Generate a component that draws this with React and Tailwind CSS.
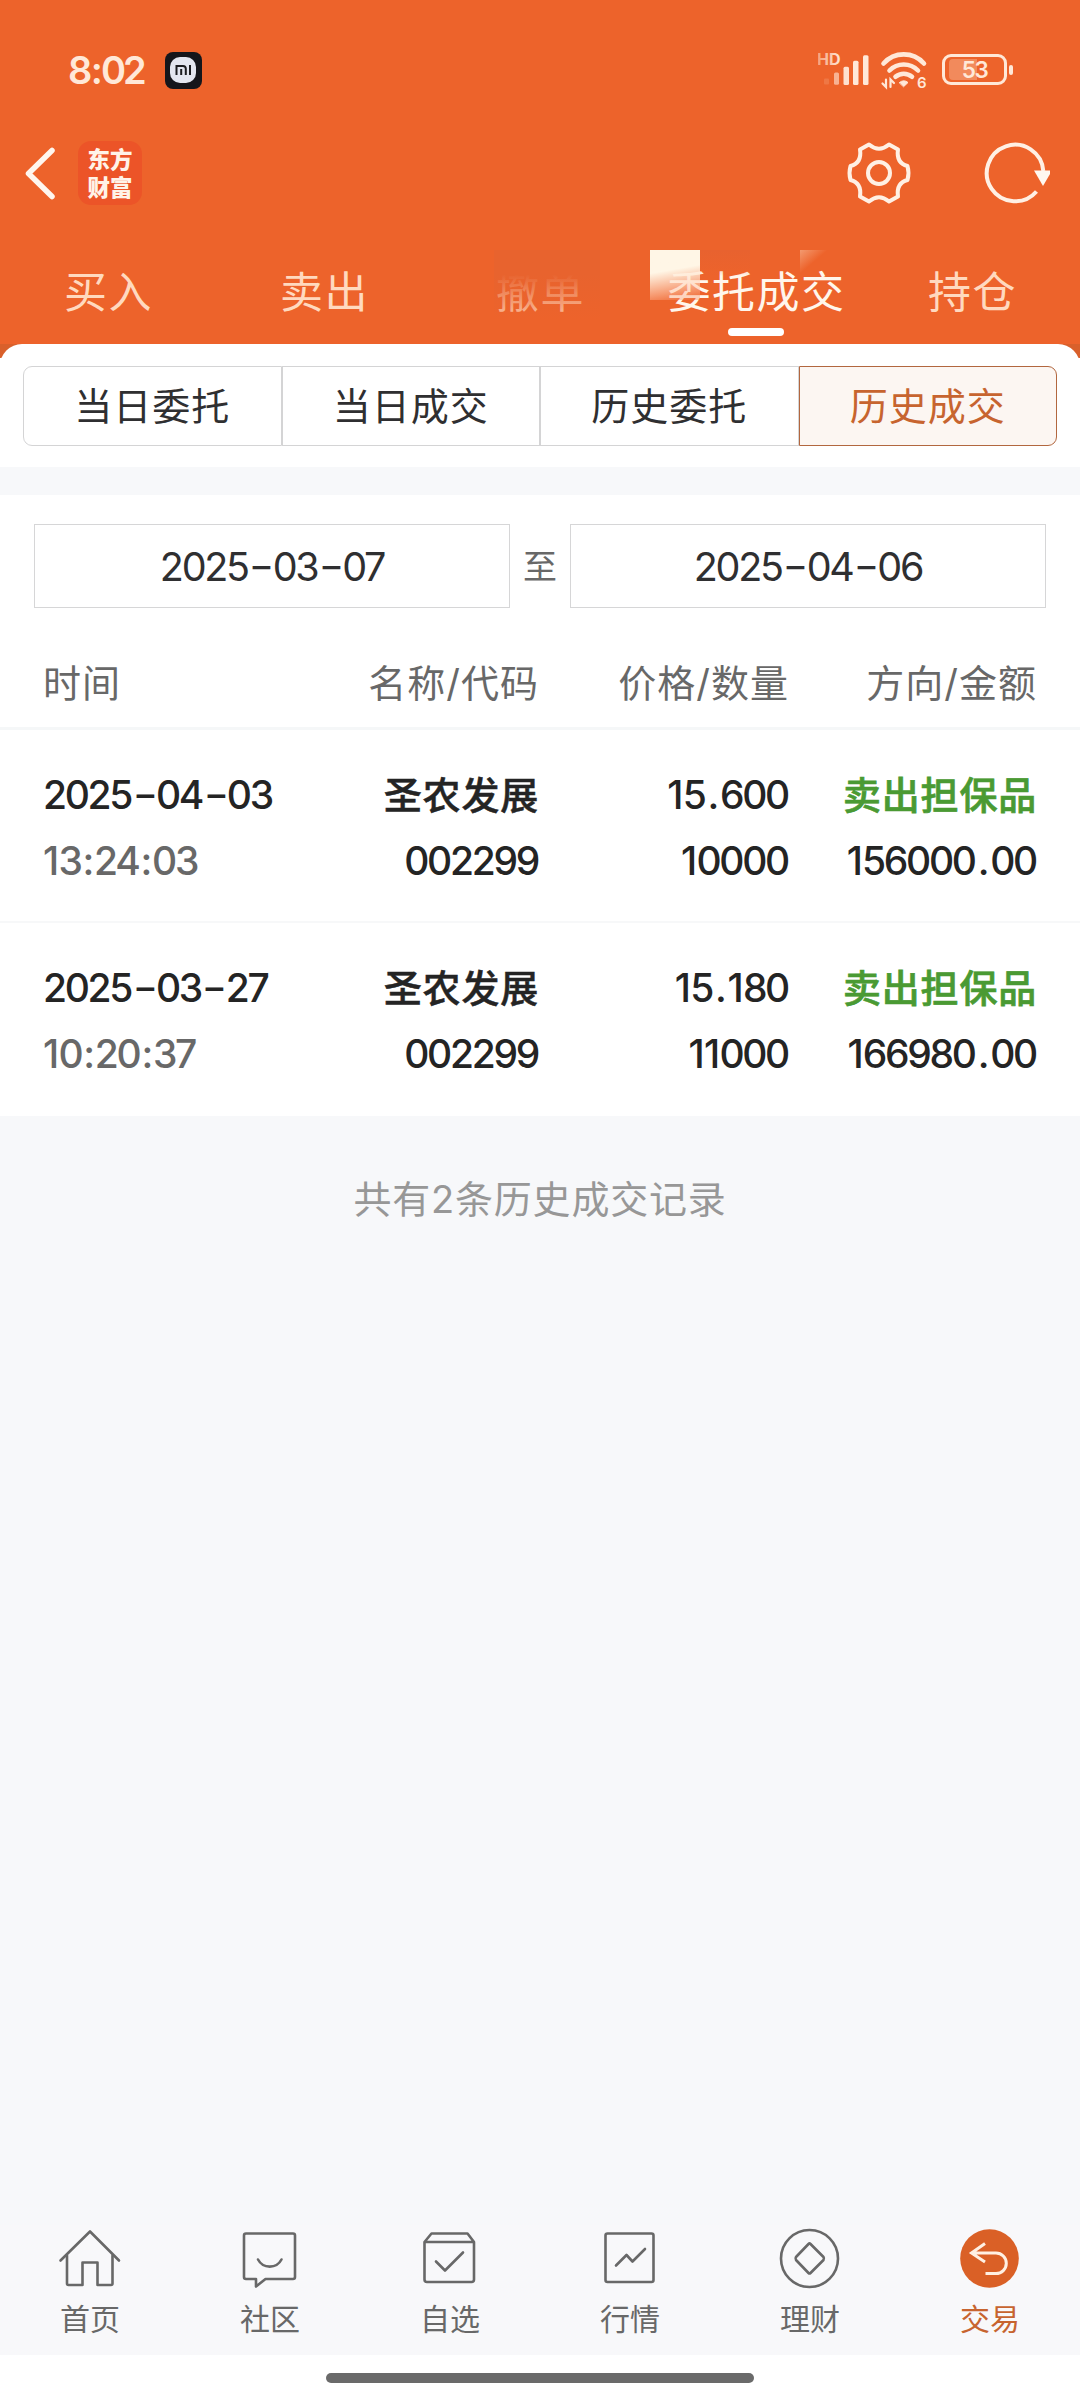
import clsx from 'clsx'

const TABS = ['买入', '卖出', '撤单', '委托成交', '持仓']
const SEGMENTS = ['当日委托', '当日成交', '历史委托', '历史成交']

const DEALS = [
  { date: '2025-04-03', time: '13:24:03', name: '圣农发展', code: '002299', price: '15.600', qty: '10000', side: '卖出担保品', amount: '156000.00' },
  { date: '2025-03-27', time: '10:20:37', name: '圣农发展', code: '002299', price: '15.180', qty: '11000', side: '卖出担保品', amount: '166980.00' },
]

const NAV = [
  { label: '首页', icon: HomeIcon },
  { label: '社区', icon: ChatIcon },
  { label: '自选', icon: BoxIcon },
  { label: '行情', icon: ChartIcon },
  { label: '理财', icon: WealthIcon },
  { label: '交易', icon: TradeIcon, active: true },
]

const stroke = { fill: 'none', stroke: 'currentColor', strokeWidth: 2.6, strokeLinecap: 'round', strokeLinejoin: 'round' }

function HomeIcon() {
  return (
    <svg width="64" height="64" viewBox="0 0 64 64" {...stroke}>
      <path d="M2.500 35.500 32 6.500 61 35.500" />
      <path d="M9 30.500V58.500q0 1.500 1.500 1.500H24.500V37.500H39.500V60H53q1.500 0 1.500-1.500V30.500" />
    </svg>
  )
}

function ChatIcon() {
  return (
    <svg width="64" height="64" viewBox="0 0 64 64" {...stroke}>
      <path d="M8 8.500H55q2 0 2 2V52q0 2-2 2H27.500L18 61.500V54H8q-2 0-2-2V10.500q0-2 2-2Z" />
      <path d="M20 34.500c5 9.500 18.500 9.500 23.500 0" />
    </svg>
  )
}

function BoxIcon() {
  return (
    <svg width="64" height="64" viewBox="0 0 64 64" {...stroke}>
      <path d="M6.500 17H56V54.500q0 2.500-2.500 2.500H9Q6.500 57 6.500 54.500ZM6.500 17 13.500 8.500H49.500L56 17" />
      <path d="m18 36.500 9 9L45 27.500" />
    </svg>
  )
}

function ChartIcon() {
  return (
    <svg width="64" height="64" viewBox="0 0 64 64" {...stroke}>
      <rect x="7.500" y="8.500" width="48" height="48.500" rx="2" />
      <path d="M18 40.500 28.500 30 34.500 36.500 47 24" />
    </svg>
  )
}

function WealthIcon() {
  return (
    <svg width="64" height="64" viewBox="0 0 64 64" {...stroke}>
      <circle cx="31.500" cy="33.500" r="28.500" />
      <path d="M30.500 19 18 32q-1 1.500 0 3L30.500 48q1 1 2 0L45.500 35q1-1.500 0-3L32.500 19q-1-1-2 0Z" />
    </svg>
  )
}

function TradeIcon() {
  return (
    <svg width="64" height="64" viewBox="0 0 64 64" fill="none">
      <circle cx="31.500" cy="33.500" r="29.300" fill="#da6026" />
      <path d="M13.500 28H38a10.300 10.300 0 0 1 0 20.600H27.500M27 18.500 13.500 28 27 37" stroke="#fff0e2" strokeWidth="3" />
    </svg>
  )
}

// digits are set tight while 1, dots, colons and dashes keep their own room
function Num({ children }) {
  return children.split(/([-.:1])/).filter(Boolean).map((part, i) => {
    if (part === '-') return <span key={i} className="relative -top-[1px] mx-[4.500px] inline-block scale-x-140">-</span>
    if (part === '.') return <span key={i} className="mx-[3px]">.</span>
    if (part === ':') return <span key={i} className="mx-[2px]">:</span>
    if (part === '1') return <span key={i} className="mr-[1.500px]">1</span>
    return part
  })
}

function SignalIcon() {
  return (
    <svg className="absolute left-[818px] top-[50px]" width="54" height="40" viewBox="0 0 54 40">
      <defs>
        <linearGradient id="hd">
          <stop offset="0" stopColor="#ffe8d8" stopOpacity=".45" />
          <stop offset="1" stopColor="#ffe8d8" />
        </linearGradient>
      </defs>
      <text x="-1" y="15.300" fontFamily="Inter, sans-serif" fontSize="16" fontWeight="700" fill="url(#hd)">HD</text>
      <g fill="#ffe8d8">
        <rect x="6" y="28.500" width="5" height="6" rx="1" opacity=".15" />
        <rect x="16" y="22.500" width="5" height="12.300" rx="1.500" opacity=".6" />
        <rect x="25.500" y="16.700" width="5.500" height="18.200" rx="1.500" opacity=".95" />
        <rect x="35" y="10.700" width="5.500" height="24.200" rx="1.500" />
        <rect x="45" y="5.300" width="5.500" height="29.600" rx="1.500" />
      </g>
    </svg>
  )
}

function WifiIcon() {
  return (
    <svg className="absolute left-[880px] top-[50px]" width="56" height="44" viewBox="0 0 56 44" fill="none" stroke="#ffe8d8" strokeWidth="4.600" strokeLinecap="round">
      <path d="M3.500 13.500A27 27 0 0 1 44 13.500" />
      <path d="M9.500 20.500A20 20 0 0 1 38 20.500" />
      <path d="M15.500 26.800A12.500 12.500 0 0 1 32 26.800" />
      <path d="M19.500 32.500q4.200-3.500 8.500 0l-4.200 4Z" fill="#ffe8d8" strokeWidth="1" strokeLinejoin="round" />
      <path d="M6 29.500V37L2.500 33.500M10.500 37V29.500L14 33" strokeWidth="2.200" />
      <text x="37" y="37.500" fontFamily="Inter, sans-serif" fontSize="15" fontWeight="600" fill="#ffe8d8" stroke="none">6</text>
    </svg>
  )
}

function Battery() {
  return (
    <div className="absolute left-[942px] top-[54px] flex items-center">
      <div className="relative flex h-[31px] w-[65px] items-center justify-center rounded-[9px] border-[3px] border-[#ffe8d8]">
        <span className="absolute left-1 top-[2px] h-[21px] w-[28px] rounded-l-[4px] bg-[#f28a5c]" />
        <span className="relative text-[22.500px] leading-[25px] font-semibold tracking-[-1.500px] text-[#ffe8d8]">53</span>
      </div>
      <span className="ml-[2px] h-[10px] w-[4px] rounded-[2px] bg-[#ffe8d8]" />
    </div>
  )
}

function StatusBar() {
  return (
    <div className="relative h-[130px]">
      <span className="absolute left-[68px] top-[50px] text-[38px] leading-[40px] font-semibold tracking-[-3.200px] text-[#ffe8d8]">
        8<span className="mx-[1.500px]">:</span>02
      </span>
      <svg className="absolute left-[165px] top-[52px]" width="37" height="37" viewBox="0 0 37 37">
        <rect width="37" height="37" rx="8" fill="#15161b" />
        <rect x="5" y="5" width="26" height="26" rx="10" fill="#e3e6f0" />
        <path d="M11.500 23V14H18q2.800 0 2.800 2.800V23M16.200 17v6M25 13v10" fill="none" stroke="#1b1c20" strokeWidth="2" />
      </svg>
      <SignalIcon />
      <WifiIcon />
      <Battery />
    </div>
  )
}

function TitleBar() {
  return (
    <div className="flex h-[86px] items-center">
      <svg className="ml-[20px]" width="40" height="60" viewBox="0 0 40 60" fill="none" stroke="#fff6ee" strokeWidth="5.500" strokeLinecap="round" strokeLinejoin="round">
        <path d="M32 7.500 8.500 30.500 32 53.500" />
      </svg>
      <div className="ml-[18px] flex h-[64px] w-[64px] flex-col items-center justify-center gap-[2px] rounded-[13px] bg-[#ec5428] pb-[2px] text-[22.500px] leading-[26px] font-black text-[#fff3e8] font-['Noto_Sans_CJK_SC',sans-serif]">
        <span>东方</span>
        <span>财富</span>
      </div>
      <svg className="ml-auto" width="70" height="70" viewBox="-35 -35 70 70" fill="none" stroke="#fff0e4" strokeWidth="4" strokeLinejoin="round">
        <path d="M-10-28.500Q0-20 10-28.500L19-23.500Q17-10 28.500-7Q30.500 0 28.500 7Q17 10 19 23.500L10 28.500Q0 20-10 28.500L-19 23.500Q-17 10-28.500 7Q-30.500 0-28.500-7Q-17-10-19-23.500Z" />
        <circle r="11" />
      </svg>
      <svg className="ml-[66px] mr-[30px]" width="70" height="70" viewBox="-35 -35 70 70" fill="none" stroke="#fff0e4" strokeWidth="4">
        <path d="M28.300-2A28.300 28.300 0 1 0 21.500 18.500" />
        <path d="M19-2.500H37L28 13Z" fill="#fff8f0" stroke="none" />
      </svg>
    </div>
  )
}

function Tabs() {
  return (
    <div className="relative flex h-[128px] text-[43px] leading-[60px] tracking-[1.500px]">
      {TABS.map((t, i) => (
        <div key={t} className={clsx('relative flex w-[216px] shrink-0 justify-center pt-[46px] pl-[1px] whitespace-nowrap', i === 3 ? 'text-[#fff6ec]' : 'text-[#ffd9bf]')}>
          {t}
          {i === 3 && <span className="absolute bottom-[8px] left-[80px] h-2 w-[56px] rounded-full bg-white" />}
        </div>
      ))}
      {/* shimmer patches over the tab labels */}
      <span className="absolute left-[494px] top-[34px] h-[70px] w-[106px] bg-linear-to-b from-[#e8632e] from-35% to-[#ed632b]/20" />
      <span className="absolute left-[650px] top-[34px] h-[50px] w-[50px] bg-linear-170 from-[#fff6e6] from-40% to-[#ed632b]/30" />
      <span className="absolute left-[700px] top-[34px] h-[26px] w-[50px] bg-linear-to-b from-[#e8622f] to-transparent" />
      <span className="absolute left-[800px] top-[34px] h-[24px] w-[28px] bg-linear-to-br from-[#f39a70] to-transparent to-50%" />
    </div>
  )
}

function Segments() {
  return (
    <div className="flex h-[80px] text-[38px] leading-none tracking-[1px] text-[#2f2f31]">
      {SEGMENTS.map((s, i) => (
        <div
          key={s}
          className={clsx(
            'flex w-[258.500px] items-center justify-center border',
            i === 0 && 'rounded-l-[9px]',
            i < 3 ? 'border-[#d4d4d5]' : 'rounded-r-[9px] border-[#b2673f] bg-[#fcf6f2] text-[#c7642f]',
          )}
        >
          {s}
        </div>
      ))}
    </div>
  )
}

function DateBox({ value }) {
  return (
    <div className="flex h-[84px] w-[476px] items-center justify-center border border-[#d6d6d7] pt-[3px] text-[39.500px] tracking-[-2.300px] text-[#2f2f31]">
      <p><Num>{value}</Num></p>
    </div>
  )
}

const COLS = 'grid grid-cols-[230px_266px_250px_248px] px-[43px] whitespace-nowrap [&>*:not(:first-child)]:text-right'

function DealRow({ deal }) {
  return (
    <div className={clsx(COLS, 'h-[193px] border-b-2 border-[#f7f8f9] pt-[32px] text-[39px] leading-[66px] font-medium tracking-[-2.300px] text-[#242424] last:border-0')}>
      <div><p><Num>{deal.date}</Num></p><p className="text-[#686868]"><Num>{deal.time}</Num></p></div>
      <div><p className="text-[38px] tracking-[0.800px] [-webkit-text-stroke:0.500px]">{deal.name}</p><p className="pr-[1px]"><Num>{deal.code}</Num></p></div>
      <div className="pr-[1px]"><p><Num>{deal.price}</Num></p><p><Num>{deal.qty}</Num></p></div>
      <div><p className="text-[38px] tracking-[0.800px] text-[#4a9a33] [-webkit-text-stroke:0.700px]">{deal.side}</p><p className="pr-[1px]"><Num>{deal.amount}</Num></p></div>
    </div>
  )
}

export default function App() {
  return (
    <div className="flex h-[2400px] w-[1080px] flex-col overflow-hidden bg-[#f7f8fa] font-[Inter,'Noto_Sans_CJK_SC',sans-serif]">
      <header className="h-[344px] shrink-0 bg-[#ed632b]">
        <StatusBar />
        <TitleBar />
        <Tabs />
      </header>

      <div className="shrink-0 bg-linear-to-b from-[#d9602b] from-[14px] to-white to-[14px]">
        <div className="h-[123px] rounded-t-[22px] bg-white px-[23px] pt-[22px]">
          <Segments />
        </div>
      </div>

      <main className="mt-[28px] shrink-0 bg-white">
        <div className="flex items-center justify-between px-[34px] pt-[29px]">
          <DateBox value="2025-03-07" />
          <span className="pt-[2px] text-[34px] leading-none text-[#686868]">至</span>
          <DateBox value="2025-04-06" />
        </div>
        <div className={clsx(COLS, 'h-[122px] border-b-[3px] border-[#f5f7f8] pt-[45px] text-[38px] leading-[60px] tracking-[1px] text-[#686868]')}>
          <span>时间</span>
          <span>名称/代码</span>
          <span>价格/数量</span>
          <span>方向/金额</span>
        </div>
        <div>
          {DEALS.map((d) => <DealRow key={d.date} deal={d} />)}
        </div>
      </main>

      <p className="mt-[53px] text-center text-[38px] leading-[60px] tracking-[0.800px] text-[#979797]">共有{DEALS.length}条历史成交记录</p>

      <nav className="mt-auto flex h-[130px] shrink-0 bg-[#f8f8fa]">
        {NAV.map(({ label, icon: Icon, active }) => (
          <div key={label} className={clsx('flex w-[180px] flex-col items-center text-[30px] leading-[40px]', active ? 'text-[#c7642f]' : 'text-[#686868]')}>
            <Icon />
            <span className="mt-[10px]">{label}</span>
          </div>
        ))}
      </nav>
      <div className="flex h-[45px] shrink-0 justify-center bg-white pt-[18px]">
        <span className="h-[10px] w-[428px] rounded-full bg-[#6a6a6a]" />
      </div>
    </div>
  )
}
